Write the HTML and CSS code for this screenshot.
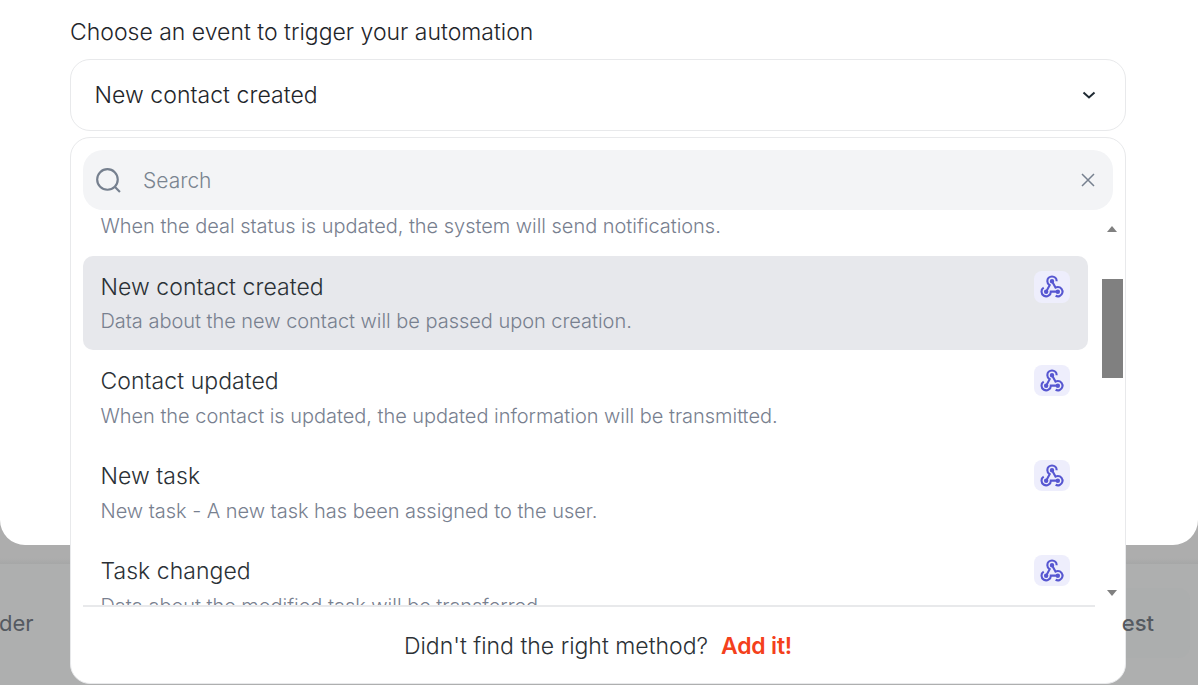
FILE: index.html
```html
<!DOCTYPE html>
<html lang="en">
<head>
<meta charset="utf-8">
<title>Choose an event</title>
<link rel="stylesheet" href="styles.css">
</head>
<body>
<svg class="defs" width="0" height="0" aria-hidden="true">
  <symbol id="hook" viewBox="0 1 24 24">
    <path d="M4.9 13.6a4 4 0 1 0 6.1 3.4h6"/>
    <path d="M15.1 20.5a4 4 0 1 0 1.9-7.5c-.7 0-1.4.2-2 .5l-3-5.5"/>
    <path d="M16 8a4 4 0 1 0-8 0c0 1.5.8 2.8 2 3.5l-3 5.5"/>
    <circle class="node" cx="12" cy="8" r="1"/>
    <circle class="node" cx="7" cy="17" r="1"/>
    <circle class="node" cx="17" cy="17" r="1"/>
  </symbol>
</svg>
<main class="modal">
  <p class="label">Choose an event to trigger your automation</p>
  <div class="select">
    <span>New contact created</span>
    <svg class="chev" viewBox="0 0 16 16" width="16" height="16"><path d="M2.5 5.5 8 10.5l5.5-5"/></svg>
  </div>
</main>
<div class="band"></div>
<footer class="footer">
  <span class="f-left">der</span>
  <span class="f-right">est</span>
</footer>
<section class="drop">
  <div class="search">
    <svg class="s-ico" viewBox="0 0 24 24" width="26" height="26"><circle cx="11.5" cy="11.5" r="9.5"/><path d="M18.5 18.5 23 23"/></svg>
    <span class="s-text">Search</span>
    <svg class="s-x" viewBox="0 0 16 16" width="16" height="16"><path d="M2 2l12 12M14 2 2 14"/></svg>
  </div>
  <div class="list-wrap">
    <div class="list">
      <div class="item clipped">
        <div class="txt"><div class="d">When the deal status is updated, the system will send notifications.</div></div>
      </div>
      <div class="item on">
        <div class="txt"><div class="t">New contact created</div><div class="d">Data about the new contact will be passed upon creation.</div></div>
        <span class="badge"><svg width="28" height="28"><use href="#hook"/></svg></span>
      </div>
      <div class="item">
        <div class="txt"><div class="t">Contact updated</div><div class="d">When the contact is updated, the updated information will be transmitted.</div></div>
        <span class="badge"><svg width="28" height="28"><use href="#hook"/></svg></span>
      </div>
      <div class="item">
        <div class="txt"><div class="t">New task</div><div class="d">New task - A new task has been assigned to the user.</div></div>
        <span class="badge"><svg width="28" height="28"><use href="#hook"/></svg></span>
      </div>
      <div class="item">
        <div class="txt"><div class="t">Task changed</div><div class="d">Data about the modified task will be transferred.</div></div>
        <span class="badge"><svg width="28" height="28"><use href="#hook"/></svg></span>
      </div>
    </div>
    <div class="bar">
      <i class="up"></i>
      <i class="thumb"></i>
      <i class="down"></i>
    </div>
  </div>
  <div class="add">Didn't find the right method? <a class="link">Add it!</a></div>
</section>
</body>
</html>
```
FILE: styles.css
```css
* { box-sizing: border-box; }
html, body { margin: 0; height: 685px; overflow: hidden; }
body { position: relative; background: #adadad; font-family: Inter, "Liberation Sans", sans-serif; color: #2b3136; }
.defs { position: absolute; }
.modal { height: 545px; background: #fff; border-radius: 0 0 25px 25px; padding: 19px 72px 0 70px; }
.label { margin: 0; height: 40px; font-size: 23px; line-height: 26px; font-weight: 300; color: #1f262b; }
.select { height: 72px; border: 1px solid #e8e9eb; border-radius: 20px; padding: 0 28px 0 23.5px; display: flex; align-items: center; justify-content: space-between; font-size: 23px; letter-spacing: .05px; font-weight: 300; color: #1f262b; }
.chev { fill: none; stroke: #1f2a33; stroke-width: 2; }
.band { height: 19px; background: linear-gradient(#adadad 70%, #a6a7a7); }
.footer { position: relative; height: 121px; background: #aeafaf; display: flex; justify-content: space-between; align-items: flex-start; padding: 46px 44px 0 0; font-size: 22px; color: #555a61; font-weight: 500; }
.footer::after { content: ""; position: absolute; right: 8px; top: 24px; width: 130px; height: 70px; border-radius: 12px; background: #acaeae; }
.f-left { font-weight: 400; margin-left: -1px; }
.f-right { position: relative; z-index: 1; }
.drop { position: absolute; left: 70px; top: 137px; width: 1056px; height: 547px; background: #fff; border: 1px solid #e8e9eb; border-radius: 20px; padding: 12px 12px 0; display: flex; flex-direction: column; }
.search { flex: none; height: 60px; background: #f3f4f6; border-radius: 20px; display: flex; align-items: center; padding: 0 17px 0 12px; }
.s-ico { fill: none; stroke: #76808f; stroke-width: 2; }
.s-text { flex: 1; margin-left: 22px; font-size: 21px; line-height: 26px; padding-top: 1px; color: #7a8490; font-weight: 300; }
.s-x { fill: none; stroke: #76808f; stroke-width: 1.5; }
.list-wrap { flex: none; height: 397px; display: flex; border-bottom: 2px solid #e8e9eb; margin-right: 18px; position: relative; overflow: visible; }
.list { flex: none; width: 1005px; height: 395px; overflow: hidden; }
.item { height: 95px; border-radius: 10px; padding: 14px 18px 0 17.5px; display: flex; justify-content: space-between; }
.item.clipped { height: 46px; padding: 0 18px 0 17.5px; align-items: flex-start; }
.item.clipped .d { line-height: 32px; }
.item.on { background: #e7e8ec; height: 94px; }
.t { font-size: 23px; line-height: 34px; color: #2b3136; letter-spacing: .05px; font-weight: 300; }
.d { font-size: 20px; line-height: 36px; color: #78808f; letter-spacing: -.03px; font-weight: 300; }
.item.on .d { line-height: 34px; }
.badge { flex: none; width: 36px; height: 31px; margin-top: 1px; background: #eeeefc; border-radius: 8px; display: flex; align-items: center; justify-content: center; }
.item.on .badge { height: 32px; }
.badge svg { fill: none; stroke: #5757d1; stroke-width: 1.8; }
.bar { position: absolute; left: 1019px; top: 0; width: 21px; height: 395px; }
.up, .down { position: absolute; left: 5px; width: 0; height: 0; border-left: 5.5px solid transparent; border-right: 5.5px solid transparent; }
.up { top: 16px; border-bottom: 6px solid #808080; }
.down { top: 380px; border-top: 6px solid #808080; }
.thumb { position: absolute; left: 0; top: 69px; width: 21px; height: 99px; background: #808080; }
.add { flex: 1; display: flex; align-items: center; justify-content: center; gap: 13px; font-size: 23px; padding-top: 2px; color: #2b3136; font-weight: 300; }
.link { color: #f4401c; font-weight: 600; letter-spacing: -.2px; }
```
